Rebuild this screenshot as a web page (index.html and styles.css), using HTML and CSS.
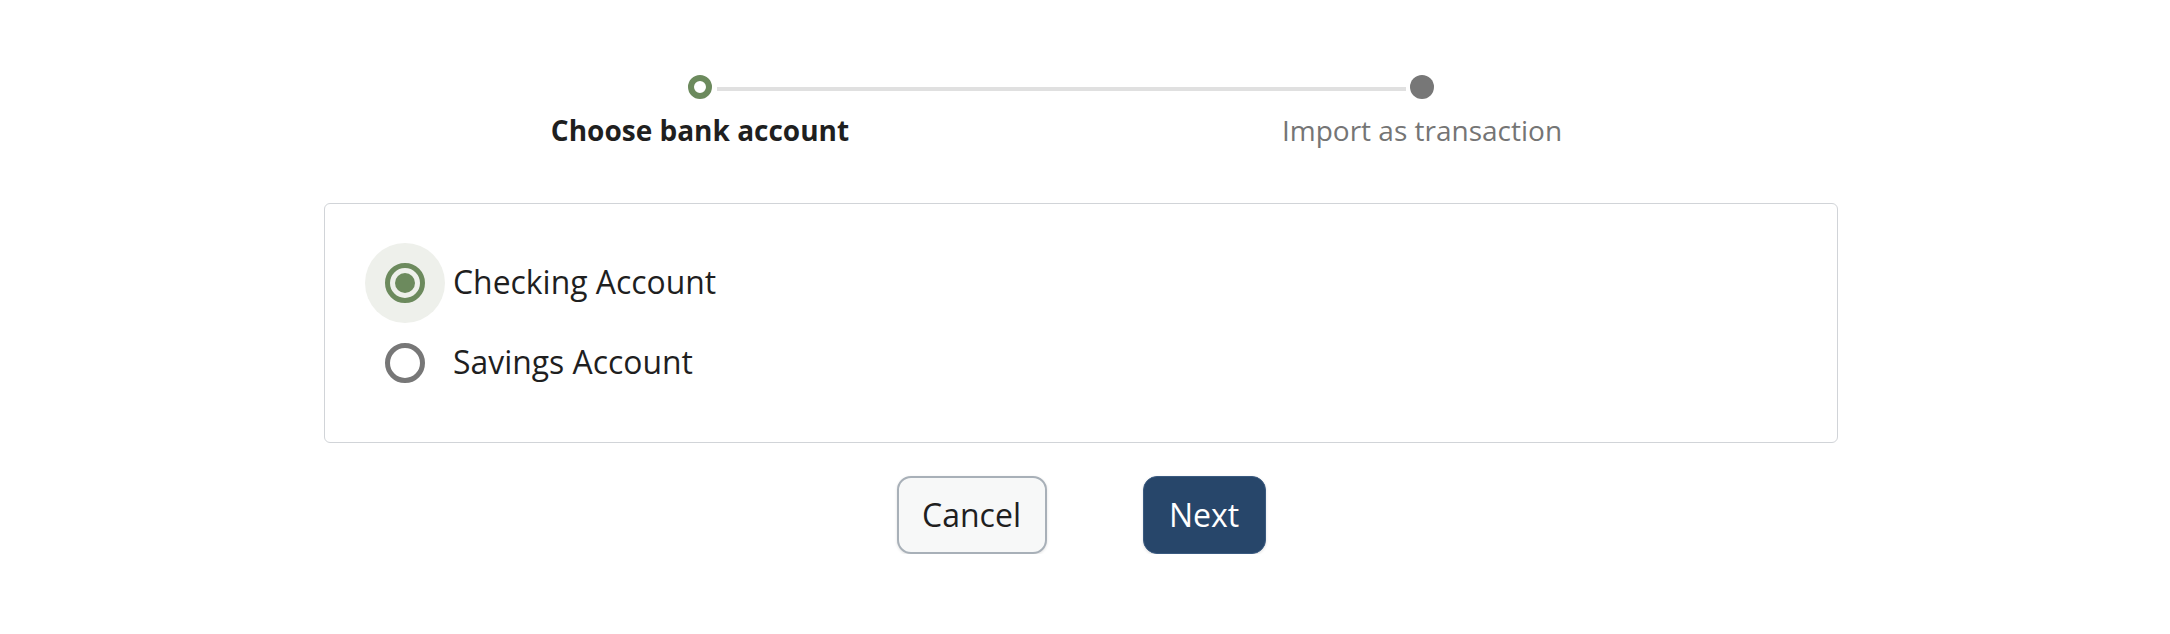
FILE: index.html
```html
<!DOCTYPE html>
<html lang="en">
<head>
<meta charset="utf-8">
<title>Choose bank account</title>
<link rel="stylesheet" href="styles.css">
</head>
<body>
<div class="wrap">
  <div class="stepper">
    <div class="track">
      <span class="dot dot-active"></span>
      <span class="line"></span>
      <span class="dot dot-todo"></span>
    </div>
    <div class="labels">
      <div class="label label-active">Choose bank account</div>
      <div class="label label-todo">Import as transaction</div>
    </div>
  </div>

  <div class="card">
    <label class="option">
      <span class="halo halo-on"><span class="radio radio-on"><span class="radio-dot"></span></span></span>
      <span class="option-text">Checking Account</span>
    </label>
    <label class="option">
      <span class="halo"><span class="radio radio-off"></span></span>
      <span class="option-text">Savings Account</span>
    </label>
  </div>

  <div class="actions">
    <button class="btn btn-cancel" type="button">Cancel</button>
    <button class="btn btn-next" type="button">Next</button>
  </div>
</div>
</body>
</html>
```

FILE: styles.css
```css
html, body {
  margin: 0;
  padding: 0;
  background: #ffffff;
}

body {
  font-family: "Open Sans", "Noto Sans", "Liberation Sans", sans-serif;
  color: #1f1f1f;
}

.wrap {
  width: 1514px;
  margin-left: 324px;
  padding-top: 75px;
}

.stepper {
  display: flex;
  flex-direction: column;
}

.track {
  display: flex;
  align-items: center;
  margin-left: 364px;
  width: 746px;
  height: 24px;
}

.dot {
  width: 24px;
  height: 24px;
  border-radius: 50%;
  box-sizing: border-box;
  flex: none;
}

.dot-active {
  border: 6px solid #6c8a5d;
  background: #ffffff;
}

.dot-todo {
  background: #777777;
}

.line {
  flex: 1;
  height: 4px;
  margin: 4px 4px 0 5px;
  background: #e0e0e0;
}

.labels {
  display: grid;
  grid-template-columns: 722px 722px;
  margin-left: 15px;
  margin-top: 12px;
  margin-bottom: 2px;
}

.label {
  text-align: center;
  font-size: 28px;
  line-height: 38px;
}

.label-active {
  font-weight: 700;
  color: #1f1f1f;
}

.label-todo {
  font-weight: 400;
  color: #757575;
}

.card {
  margin-top: 52px;
  border: 1px solid #d1d4d8;
  border-radius: 6px;
  padding: 39px 40px;
  display: flex;
  flex-direction: column;
}

.option {
  display: flex;
  align-items: center;
  height: 80px;
  gap: 8px;
}

.halo {
  width: 80px;
  height: 80px;
  border-radius: 50%;
  display: flex;
  align-items: center;
  justify-content: center;
  flex: none;
}

.halo-on {
  background: #eef0eb;
}

.radio {
  width: 40px;
  height: 40px;
  border-radius: 50%;
  box-sizing: border-box;
  display: flex;
  align-items: center;
  justify-content: center;
}

.radio-on {
  border: 5px solid #6c8a5d;
}

.radio-dot {
  width: 20px;
  height: 20px;
  border-radius: 50%;
  background: #6c8a5d;
}

.radio-off {
  border: 5px solid #777777;
}

.option-text {
  font-size: 31.9px;
  line-height: 43px;
  padding-bottom: 3px;
  color: #1f1f1f;
}

.actions {
  display: flex;
  justify-content: center;
  gap: 96px;
  margin-top: 33px;
}

.btn {
  font-family: "Open Sans", "Noto Sans", "Liberation Sans", sans-serif;
  font-size: 32px;
  height: 78px;
  padding: 0 0 2px 0;
  border-radius: 14px;
  box-sizing: border-box;
  cursor: pointer;
  box-shadow: 0 1px 3px rgba(0, 0, 0, 0.12);
}

.btn-cancel {
  width: 150px;
  background: #f7f8f8;
  border: 2px solid #a8b0b8;
  color: #1f1f1f;
}

.btn-next {
  width: 123px;
  background: #27466a;
  border: 1px solid #3a5a80;
  color: #ffffff;
}
```
